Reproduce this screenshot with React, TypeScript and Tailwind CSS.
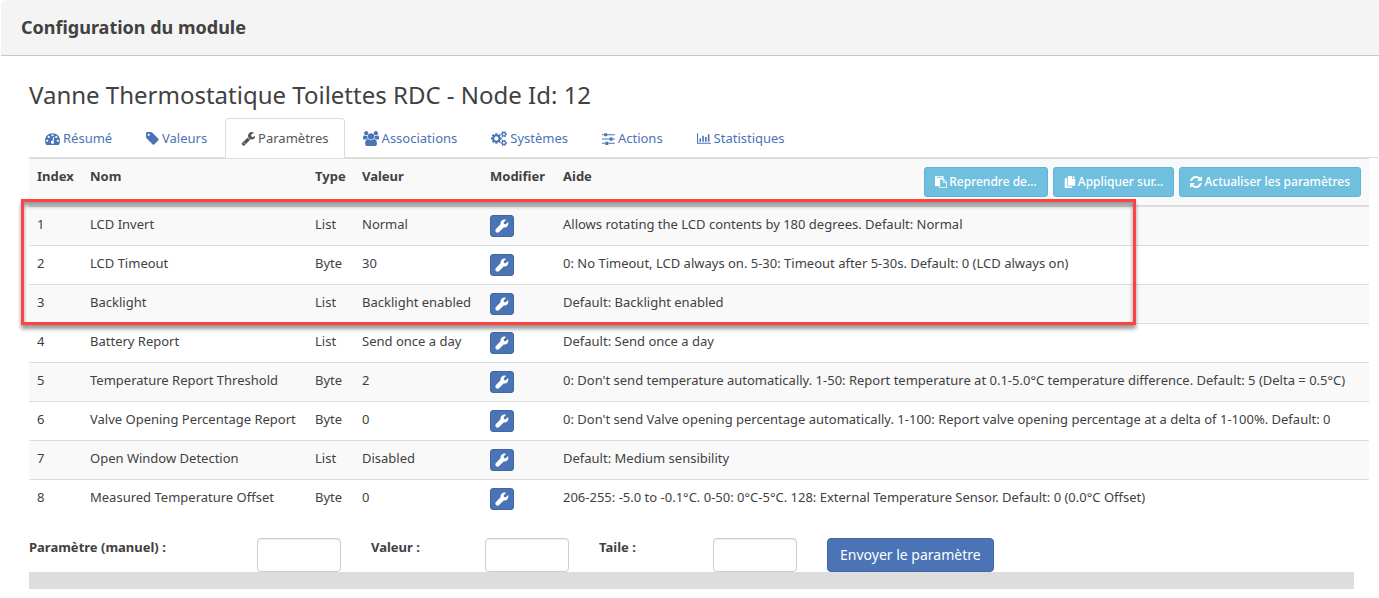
import React from 'react';
import { FaCopy } from 'react-icons/fa';

interface GlyphProps {
  w: number;
  d: string;
  className?: string;
}

const Glyph: React.FC<GlyphProps> = ({ w, d, className = 'h-[15px]' }) => (
  <svg viewBox={`0 0 ${w} 1792`} fill="currentColor" aria-hidden="true" className={`w-auto shrink-0 ${className}`}>
    <path d={d} />
  </svg>
);

const SolidWrench = () => (
  <svg viewBox="0 0 14 14" fill="currentColor" aria-hidden="true" className="h-[14px] w-[14px] shrink-0">
    <path d="M11 .9C8.100-.2 5.100 2 5.500 5.200L1 9.900c-2 2.100 1 5.100 3.100 3.100l4.600-4.500c3.100.6 5.400-2.300 4.400-5.500L10.800 5.300 9 5 8.700 3.200z" />
  </svg>
);

const WRENCH =
  'M448 1472q0-26-19-45t-45-19-45 19-19 45 19 45 45 19 45-19 19-45zm644-420l-682 682q-37 37-90 37-52 0-91-37l-106-108q-38-36-38-90 0-53 38-91l681-681q39 98 114.5 173.5t173.5 114.5zm634-435q0 39-23 106-47 134-164.5 217.5t-258.5 83.5q-185 0-316.5-131.5t-131.5-316.5 131.5-316.5 316.5-131.5q58 0 121.5 16.5t107.5 46.5q16 11 16 28t-16 28l-293 169v224l193 107q5-3 79-48.5t135.5-81 70.5-35.5q15 0 23.5 10t8.5 25z';
const GAUGE =
  'M384 1152q0-53-37.5-90.5t-90.5-37.5-90.5 37.5-37.5 90.5 37.5 90.5 90.5 37.5 90.5-37.5 37.5-90.5zm192-448q0-53-37.5-90.5t-90.5-37.5-90.5 37.5-37.5 90.5 37.5 90.5 90.5 37.5 90.5-37.5 37.5-90.5zm428 481l101-382q6-26-7.5-48.5t-38.5-29.5-48 6.5-30 39.5l-101 382q-60 5-107 43.5t-63 98.5q-20 77 20 146t117 89 146-20 89-117q16-60-6-117t-72-91zm660-33q0-53-37.5-90.5t-90.5-37.5-90.5 37.5-37.5 90.5 37.5 90.5 90.5 37.5 90.5-37.5 37.5-90.5zm-640-640q0-53-37.5-90.5t-90.5-37.5-90.5 37.5-37.5 90.5 37.5 90.5 90.5 37.5 90.5-37.5 37.5-90.5zm448 192q0-53-37.5-90.5t-90.5-37.5-90.5 37.5-37.5 90.5 37.5 90.5 90.5 37.5 90.5-37.5 37.5-90.5zm320 448q0 261-141 483-19 29-54 29h-1402q-35 0-54-29-141-221-141-483 0-182 71-348t191-286 286-191 348-71 348 71 286 191 191 286 71 348z';
const TAG =
  'M448 448q0-53-37.5-90.5t-90.5-37.5-90.5 37.5-37.5 90.5 37.5 90.5 90.5 37.5 90.5-37.5 37.5-90.5zm1067 576q0 53-37 90l-491 492q-39 37-91 37-53 0-90-37l-715-716q-38-37-64.5-101t-26.5-117v-416q0-52 38-90t90-38h416q53 0 117 26.5t102 64.5l715 714q37 39 37 91z';
const USERS =
  'M593 896q-162 5-265 128h-134q-82 0-138-40.5t-56-118.5q0-353 124-353 6 0 43.5 21t97.5 42.5 119 21.5q67 0 133-23-5 37-5 66 0 139 81 256zm1071 637q0 120-73 189.5t-194 69.5h-874q-121 0-194-69.5t-73-189.5q0-53 3.5-103.5t14-109 26.5-108.5 43-97.5 62-81 85.5-53.5 111.5-20q10 0 43 21.5t73 48 107 48 135 21.5 135-21.5 107-48 73-48 43-21.5q61 0 111.5 20t85.5 53.5 62 81 43 97.5 26.5 108.5 14 109 3.5 103.5zm-1024-1277q0 106-75 181t-181 75-181-75-75-181 75-181 181-75 181 75 75 181zm704 384q0 159-112.5 271.5t-271.5 112.5-271.5-112.5-112.5-271.5 112.5-271.5 271.5-112.5 271.5 112.5 112.5 271.5zm576 225q0 78-56 118.5t-138 40.5h-134q-103-123-265-128 81-117 81-256 0-29-5-66 66 23 133 23 59 0 119-21.5t97.5-42.5 43.5-21q124 0 124 353zm-128-609q0 106-75 181t-181 75-181-75-75-181 75-181 181-75 181 75 75 181z';
const COGS =
  'M896 896q0-106-75-181t-181-75-181 75-75 181 75 181 181 75 181-75 75-181zm768 512q0-52-38-90t-90-38-90 38-38 90q0 53 37.5 90.5t90.5 37.5 90.5-37.5 37.5-90.5zm0-1024q0-52-38-90t-90-38-90 38-38 90q0 53 37.5 90.5t90.5 37.5 90.5-37.5 37.5-90.5zm-384 421v185q0 10-7 19.5t-16 10.5l-155 24q-11 35-32 76 34 48 90 115 7 11 7 20 0 12-7 19-23 30-82.5 89.5t-78.5 59.5q-11 0-21-7l-115-90q-37 19-77 31-11 108-23 155-7 24-30 24h-186q-11 0-20-7.5t-10-17.5l-23-153q-34-10-75-31l-118 89q-7 7-20 7-11 0-21-8-144-133-144-160 0-9 7-19 10-14 41-53t47-61q-23-44-35-82l-152-24q-10-1-17-9.5t-7-19.5v-185q0-10 7-19.5t16-10.5l155-24q11-35 32-76-34-48-90-115-7-11-7-20 0-12 7-20 22-30 82-89t79-59q11 0 21 7l115 90q34-18 77-32 11-108 23-154 7-24 30-24h186q11 0 20 7.5t10 17.5l23 153q34 10 75 31l118-89q8-7 20-7 11 0 21 8 144 133 144 160 0 8-7 19-12 16-42 54t-45 60q23 48 34 82l152 23q10 2 17 10.5t7 19.5zm640 533v140q0 16-149 31-12 27-30 52 51 113 51 138 0 4-4 7-122 71-124 71-8 0-46-47t-52-68q-20 2-30 2t-30-2q-14 21-52 68t-46 47q-2 0-124-71-4-3-4-7 0-25 51-138-18-25-30-52-149-15-149-31v-140q0-16 149-31 13-29 30-52-51-113-51-138 0-4 4-7 4-2 35-20t59-34 30-16q8 0 46 46.5t52 67.5q20-2 30-2t30 2q51-71 92-112l6-2q4 0 124 70 4 3 4 7 0 25-51 138 17 23 30 52 149 15 149 31zm0-1024v140q0 16-149 31-12 27-30 52 51 113 51 138 0 4-4 7-122 71-124 71-8 0-46-47t-52-68q-20 2-30 2t-30-2q-14 21-52 68t-46 47q-2 0-124-71-4-3-4-7 0-25 51-138-18-25-30-52-149-15-149-31v-140q0-16 149-31 13-29 30-52-51-113-51-138 0-4 4-7 4-2 35-20t59-34 30-16q8 0 46 46.5t52 67.5q20-2 30-2t30 2q51-71 92-112l6-2q4 0 124 70 4 3 4 7 0 25-51 138 17 23 30 52 149 15 149 31z';
const SLIDERS =
  'M352 1408v128h-352v-128h352zm352-128q26 0 45 19t19 45v256q0 26-19 45t-45 19h-256q-26 0-45-19t-19-45v-256q0-26 19-45t45-19h256zm160-384v128h-864v-128h864zm-640-512v128h-224v-128h224zm1312 1024v128h-736v-128h736zm-960-1152q26 0 45 19t19 45v256q0 26-19 45t-45 19h-256q-26 0-45-19t-19-45v-256q0-26 19-45t45-19h256zm640 512q26 0 45 19t19 45v256q0 26-19 45t-45 19h-256q-26 0-45-19t-19-45v-256q0-26 19-45t45-19h256zm320 128v128h-224v-128h224zm0-512v128h-864v-128h864z';
const CHART =
  'M128 256v1152h1536v128h-1664v-1280zM288 896h192v384h-192zM624 576h192v704h-192zM960 704h192v576h-192zM1296 384h192v896h-192z';
const REFRESH =
  'M1511 1056q0 5-1 7-64 268-268 434.5t-478 166.5q-146 0-282.5-55t-243.5-157l-129 129q-19 19-45 19t-45-19-19-45v-448q0-26 19-45t45-19h448q26 0 45 19t19 45-19 45l-137 137q71 66 161 102t187 36q134 0 250-65t186-179q11-17 53-117 8-23 30-23h192q13 0 22.5 9.5t9.5 22.5zm25-800v448q0 26-19 45t-45 19h-448q-26 0-45-19t-19-45 19-45l138-138q-148-137-349-137-134 0-250 65t-186 179q-11 17-53 117-8 23-30 23h-199q-13 0-22.5-9.5t-9.5-22.5v-7q65-268 270-434.5t480-166.5q146 0 284 55.5t245 156.5l130-129q19-19 45-19t45 19 19 45z';
const PASTE =
  'M768 1664h896v-640h-416q-40 0-68-28t-28-68v-416h-384v1152zm256-1440v-64q0-13-9.5-22.5t-22.5-9.5h-704q-13 0-22.5 9.5t-9.5 22.5v64q0 13 9.5 22.5t22.5 9.5h704q13 0 22.5-9.5t9.5-22.5zm256 672h299l-299-299v299zm512 128v672q0 40-28 68t-68 28h-960q-40 0-68-28t-28-68v-160h-544q-40 0-68-28t-28-68v-1344q0-40 28-68t68-28h1088q40 0 68 28t28 68v328q21 13 36 28l408 408q28 28 48 76t20 88z';

const tabs = [
  { label: 'Résumé', w: 1792, d: GAUGE },
  { label: 'Valeurs', w: 1536, d: TAG },
  { label: 'Paramètres', w: 1664, d: WRENCH, active: true },
  { label: 'Associations', w: 1920, d: USERS },
  { label: 'Systèmes', w: 1920, d: COGS },
  { label: 'Actions', w: 1536, d: SLIDERS },
  { label: 'Statistiques', w: 1664, d: CHART },
];

const rows = [
  { name: 'LCD Invert', type: 'List', value: 'Normal', help: 'Allows rotating the LCD contents by 180 degrees. Default: Normal' },
  { name: 'LCD Timeout', type: 'Byte', value: '30', help: '0: No Timeout, LCD always on. 5-30: Timeout after 5-30s. Default: 0 (LCD always on)' },
  { name: 'Backlight', type: 'List', value: 'Backlight enabled', help: 'Default: Backlight enabled' },
  { name: 'Battery Report', type: 'List', value: 'Send once a day', help: 'Default: Send once a day' },
  { name: 'Temperature Report Threshold', type: 'Byte', value: '2', help: "0: Don't send temperature automatically. 1-50: Report temperature at 0.1-5.0°C temperature difference. Default: 5 (Delta = 0.5°C)" },
  { name: 'Valve Opening Percentage Report', type: 'Byte', value: '0', help: "0: Don't send Valve opening percentage automatically. 1-100: Report valve opening percentage at a delta of 1-100%. Default: 0" },
  { name: 'Open Window Detection', type: 'List', value: 'Disabled', help: 'Default: Medium sensibility' },
  { name: 'Measured Temperature Offset', type: 'Byte', value: '0', help: '206-255: -5.0 to -0.1°C. 0-50: 0°C-5°C. 128: External Temperature Sensor. Default: 0 (0.0°C Offset)' },
];

const thClass = 'border-t border-b border-[#ddd] px-2 pt-2';
const tdClass = 'border-t border-[#ddd] px-2 pt-2 whitespace-nowrap';
const actionClass =
  'flex h-[30px] items-center gap-[2px] rounded-[3px] border border-[#5bb4da] bg-[#70bfdf] px-[10px] text-xs font-medium whitespace-nowrap text-white';

const manualFields = [
  { id: 'param', label: 'Paramètre (manuel) :' },
  { id: 'value', label: 'Valeur :' },
  { id: 'size', label: 'Taile :' },
];

export default function App() {
  return (
    <div className="bg-white font-['Noto_Sans','Open_Sans',sans-serif] text-[13px] leading-[18px] text-[#414141]">
      <header className="ml-px rounded-tl-md border-b border-[#c8c8c8] bg-[#f4f4f4] px-5 pt-[15px] pb-4">
        <h1 className="text-lg leading-6 font-bold">Configuration du module</h1>
      </header>

      <main className="pt-[23px] pl-[29px]">
        <h2 className="text-2xl leading-8">Vanne Thermostatique Toilettes RDC - Node Id: 12</h2>

        <nav className="mt-[7px] mr-px flex gap-[2px] border-b border-[#ddd]">
          {tabs.map((tab) => (
            <a
              key={tab.label}
              href="#"
              className={`-mb-px flex h-10 items-center gap-[3px] rounded-t border px-[15px] ${
                tab.active ? 'border-[#ddd] border-b-white bg-white text-[#555]' : 'border-transparent text-[#4a74b5]'
              }`}
            >
              <Glyph w={tab.w} d={tab.d} />
              <span>{tab.label}</span>
            </a>
          ))}
        </nav>

        <div className="relative mr-[10px]">
          <table className="w-full table-fixed border-separate border-spacing-0 text-left">
            <colgroup>
              <col className="w-[53px]" />
              <col className="w-[225px]" />
              <col className="w-[47px]" />
              <col className="w-[128px]" />
              <col className="w-[73px]" />
              <col />
            </colgroup>
            <thead>
              <tr className="h-12 bg-[#f9f9f9] align-top">
                <th className={thClass}>Index</th>
                <th className={thClass}>Nom</th>
                <th className={thClass}>Type</th>
                <th className={thClass}>Valeur</th>
                <th className={thClass}>Modifier</th>
                <th className={thClass}>
                  <div className="flex items-start justify-between">
                    <span>Aide</span>
                    <div className="flex gap-[5px]">
                      <button className={actionClass}>
                        <Glyph w={1792} d={PASTE} className="h-3" />
                        Reprendre de...
                      </button>
                      <button className={actionClass}>
                        <FaCopy className="h-3 w-3" />
                        Appliquer sur...
                      </button>
                      <button className={actionClass}>
                        <Glyph w={1536} d={REFRESH} className="h-[14px]" />
                        Actualiser les paramètres
                      </button>
                    </div>
                  </div>
                </th>
              </tr>
            </thead>
            <tbody>
              {rows.map((row, i) => (
                <tr key={row.name} className="h-[39px] align-top odd:bg-[#f9f9f9]">
                  <td className={tdClass}>{i + 1}</td>
                  <td className={tdClass}>{row.name}</td>
                  <td className={tdClass}>{row.type}</td>
                  <td className={tdClass}>{row.value}</td>
                  <td className={tdClass}>
                    <button
                      aria-label={`Modifier ${row.name}`}
                      className="flex h-[22px] w-6 items-center justify-center rounded-[3px] border border-[#4067a3] bg-[#4a74b5] text-white"
                    >
                      <SolidWrench />
                    </button>
                  </td>
                  <td className={tdClass}>{row.help}</td>
                </tr>
              ))}
            </tbody>
          </table>
          {/* Highlight over the LCD settings */}
          <div className="pointer-events-none absolute top-[41px] -left-2 h-[126px] w-[1115px] border-[3px] border-[#ff4343] shadow-[0_4px_4px_rgba(0,0,0,0.4),inset_0_4px_4px_rgba(0,0,0,0.4)]" />
        </div>

        <form className="mt-5 grid grid-cols-[198px_repeat(5,84px)_auto] items-start justify-start gap-x-[30px]">
          {manualFields.map((field) => (
            <React.Fragment key={field.id}>
              <label htmlFor={field.id} className="font-bold whitespace-nowrap">
                {field.label}
              </label>
              <input
                id={field.id}
                type="text"
                className="h-[34px] w-full rounded border border-[#ccc] bg-white px-3 shadow-[inset_0_1px_1px_rgba(0,0,0,0.075)]"
              />
            </React.Fragment>
          ))}
          <button
            type="button"
            className="h-[34px] rounded border border-[#4067a3] bg-[#4a74b5] px-3 text-sm whitespace-nowrap text-white"
          >
            Envoyer le paramètre
          </button>
        </form>
        <div className="mr-[25px] h-[17px] bg-[#ddd]" />
      </main>
    </div>
  );
}
